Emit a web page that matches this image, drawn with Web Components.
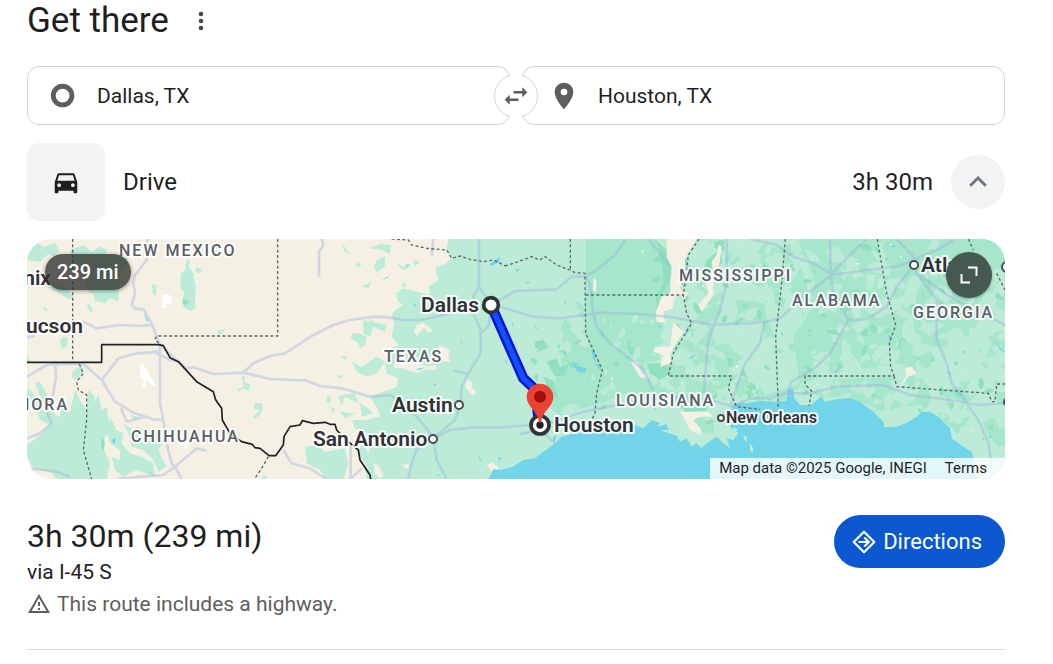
<!DOCTYPE html>
<html lang="en">
<head>
<meta charset="utf-8">
<meta name="viewport" content="width=device-width, initial-scale=1">
<title>Get there</title>
<style>
    body {
        margin: 0;
        background: #fff;
        color: #1f1f1f;
        font-family: Roboto, "Liberation Sans", sans-serif;
    }
</style>
</head>
<body>
<gt-panel>
    <gt-heading>Get there</gt-heading>
    <gt-trip>
        <gt-place slot="from" icon="origin" label="Starting point" value="Dallas, TX"></gt-place>
        <gt-place slot="to" icon="place" label="Destination" value="Houston, TX" inset></gt-place>
    </gt-trip>
    <gt-mode icon="car">Drive<span slot="time">3h 30m</span></gt-mode>
    <gt-map>239 mi</gt-map>
    <gt-summary>
        <span slot="total">3h 30m (239 mi)</span>
        <span slot="via">via I-45 S</span>
        <span slot="note">This route includes a highway.</span>
    </gt-summary>
</gt-panel>

<script>
class GtElement extends HTMLElement {
    constructor() {
        super();
        this.attachShadow({mode: 'open'});
        const template = document.createElement('template');
        template.innerHTML = this.template();
        this.shadowRoot.appendChild(template.content.cloneNode(true));
    }
}

const ICONS = {
    more: '<path d="M12 8a2 2 0 1 0 0-4 2 2 0 0 0 0 4zm0 6a2 2 0 1 0 0-4 2 2 0 0 0 0 4zm0 6a2 2 0 1 0 0-4 2 2 0 0 0 0 4z"/>',
    origin: '<circle cx="11.700" cy="11.700" r="7" fill="none" stroke="currentColor" stroke-width="3.600"/>',
    place: '<path d="M12 2C8.13 2 5 5.13 5 9c0 5.25 7 13 7 13s7-7.75 7-13c0-3.87-3.13-7-7-7zm0 9.5a2.5 2.5 0 0 1 0-5 2.5 2.5 0 0 1 0 5z"/>',
    swap: '<path d="M6.99 11L3 15l3.99 4v-3H14v-2H6.99v-3zM21 9l-3.99-4v3H10v2h7.01v3L21 9z"/>',
    car: '<path d="M18.92 6.01C18.72 5.42 18.16 5 17.5 5h-11c-.66 0-1.21.42-1.42 1.01L3 12v8c0 .55.45 1 1 1h1c.55 0 1-.45 1-1v-1h12v1c0 .55.45 1 1 1h1c.55 0 1-.45 1-1v-8l-2.08-5.99zM6.5 16c-.83 0-1.5-.67-1.5-1.5S5.67 13 6.5 13s1.5.67 1.5 1.5S7.33 16 6.5 16zm11 0c-.83 0-1.5-.67-1.5-1.5s.67-1.5 1.5-1.5 1.5.67 1.5 1.5-.67 1.5-1.5 1.5zM5 11l1.5-4.5h11L19 11H5z"/>',
    up: '<path d="M4.2 15.800l7.800-7.800 7.800 7.800" fill="none" stroke="currentColor" stroke-width="3"/>',
    expand: '<path d="M11 4.5h8.500v8.500M13 19.500H4.500V11" fill="none" stroke="currentColor" stroke-width="2"/>',
    directions: '<path d="M12 1.700L22.300 12 12 22.300 1.700 12z" fill="none" stroke="currentColor" stroke-width="2.200" stroke-linejoin="round"/><path d="M6.500 12h10M12.300 7.500l4.500 4.500-4.500 4.500" fill="none" stroke="currentColor" stroke-width="2.200"/>',
    warning: '<path d="M12 5.990L19.530 19H4.470L12 5.990M12 2L1 21h22L12 2zm1 14h-2v2h2v-2zm0-6h-2v4h2v-4z"/>'
};

window.customElements.define('gt-icon', class extends GtElement {
    template() {
        return `
        <style>
        :host {
            display: inline-block;
            flex: none;
            width: var(--icon-size, 24px);
            height: var(--icon-size, 24px);
        }
        svg {
            display: block;
            width: 100%;
            height: 100%;
        }
        </style>
        <svg viewBox="0 0 24 24" fill="currentColor" aria-hidden="true">${ICONS[this.getAttribute('name')]}</svg>`;
    }
});

window.customElements.define('gt-panel', class extends GtElement {
    template() {
        return `
        <style>
        :host {
            display: block;
            padding: 0 48px 0 27px;
        }
        main {
            display: flex;
            flex-direction: column;
            gap: 18px;
        }
        </style>
        <main><slot></slot></main>`;
    }
});

window.customElements.define('gt-heading', class extends GtElement {
    template() {
        return `
        <style>
        :host {
            display: flex;
            align-items: center;
            gap: 18px;
            padding-bottom: 6px;
        }
        h1 {
            margin: 0;
            font-size: 35px;
            font-weight: 400;
            line-height: 42px;
        }
        button {
            display: flex;
            padding: 0;
            border: 0;
            background: none;
            color: #474747;
            --icon-size: 28px;
        }
        </style>
        <h1><slot></slot></h1>
        <button type="button" aria-label="More options"><gt-icon name="more"></gt-icon></button>`;
    }
});

window.customElements.define('gt-trip', class extends GtElement {
    template() {
        return `
        <style>
        :host {
            display: grid;
            grid-template-columns: 1fr 1fr;
            gap: 12px;
            position: relative;
        }
        button {
            position: absolute;
            top: 50%;
            left: 50%;
            transform: translate(-50%, -50%);
            display: flex;
            align-items: center;
            justify-content: center;
            box-sizing: border-box;
            width: 44px;
            height: 44px;
            padding: 0;
            border: 1px solid #d2d2d2;
            border-radius: 50%;
            background: #fff;
            color: #5e5e5e;
            --icon-size: 30px;
        }
        /* opens the ring where it crosses the gap between the fields */
        button::before {
            content: "";
            position: absolute;
            top: -1px;
            bottom: -1px;
            left: 15px;
            width: 12px;
            background: #fff;
        }
        gt-icon {
            position: relative;
        }
        </style>
        <slot name="from"></slot>
        <slot name="to"></slot>
        <button type="button" aria-label="Swap start and destination"><gt-icon name="swap"></gt-icon></button>`;
    }
});

window.customElements.define('gt-place', class extends GtElement {
    template() {
        return `
        <style>
        :host {
            display: block;
            min-width: 0;
        }
        label {
            display: flex;
            align-items: center;
            gap: 18px;
            box-sizing: border-box;
            height: 59px;
            padding: 0 19px;
            border: 1px solid #d2d2d2;
            border-radius: 12px;
            color: #5e5e5e;
            --icon-size: 32px;
        }
        :host([inset]) label {
            padding-left: 25px;
        }
        input {
            flex: 1;
            min-width: 0;
            padding: 0;
            border: 0;
            outline: 0;
            background: none;
            color: #1f1f1f;
            font: 21px/28px Roboto, "Liberation Sans", sans-serif;
        }
        </style>
        <label>
        <gt-icon name="${this.getAttribute('icon')}"></gt-icon>
        <input type="text" aria-label="${this.getAttribute('label')}" value="${this.getAttribute('value')}">
        </label>`;
    }
});

window.customElements.define('gt-mode', class extends GtElement {
    template() {
        return `
        <style>
        :host {
            display: flex;
            align-items: center;
            gap: 18px;
            font-size: 24px;
            line-height: 32px;
        }
        .tile {
            display: flex;
            align-items: center;
            justify-content: center;
            width: 78px;
            height: 78px;
            border-radius: 12px;
            background: #f1f3f4;
            --icon-size: 30px;
        }
        .name {
            flex: 1;
        }
        button {
            display: flex;
            align-items: center;
            justify-content: center;
            width: 54px;
            height: 54px;
            padding: 0;
            border: 0;
            border-radius: 50%;
            background: #f1f3f4;
            color: #70757a;
        }
        </style>
        <div class="tile"><gt-icon name="${this.getAttribute('icon')}"></gt-icon></div>
        <span class="name"><slot></slot></span>
        <slot name="time"></slot>
        <button type="button" aria-label="Collapse"><gt-icon name="up"></gt-icon></button>`;
    }
});

// Small jagged patches of ground cover, repeatable for a given seed.
function patches(seed, count, x, y, width, height, size) {
    const next = () => (seed = (seed * 16807) % 2147483647) / 2147483647;
    let d = '';
    for (let i = 0; i < count; i++) {
        const cx = x + next() * width;
        const cy = y + next() * height;
        const r = size * (0.3 + next());
        const tilt = next() * 3;
        for (let k = 0; k < 8; k++) {
            const angle = k * Math.PI / 4;
            const reach = r * (0.4 + next() * 0.9);
            const px = Math.cos(angle) * reach;
            const py = Math.sin(angle) * reach * 0.6;
            d += (k ? 'L' : 'M')
                + Math.round(cx + px * Math.cos(tilt) - py * Math.sin(tilt)) + ' '
                + Math.round(cy + px * Math.sin(tilt) + py * Math.cos(tilt));
        }
        d += 'Z';
    }
    return d;
}

window.customElements.define('gt-map', class extends GtElement {
    template() {
        // The drawing is made in four tiles, west to east, at three units to the pixel.
        const west = 'transform="translate(-21 -27)"';
        const texas = 'transform="translate(729 -27)"';
        const delta = 'transform="translate(1419 -27)"';
        const east = 'transform="translate(2169 -27)"';
        return `
        <style>
        :host {
            display: block;
            position: relative;
            overflow: hidden;
            height: 240px;
            border-radius: 24px;
            background: #f5f0e4;
        }
        svg {
            display: block;
            width: 100%;
            height: 100%;
        }
        .light { fill: #bcecd8; }
        .mid { fill: #a6e6cb; }
        .deep { fill: #90dfbd; }
        .sand { fill: #f5f0e4; }
        .white { fill: #fff; }
        .water { fill: #72d4e9; }
        .roads { fill: none; stroke: #9aaedb; stroke-opacity: .4; stroke-width: 8; stroke-linejoin: round; }
        .states { fill: none; stroke: #5c6b6b; stroke-width: 4; stroke-dasharray: 9 7; }
        .country { fill: none; stroke: #202124; stroke-width: 5; stroke-linejoin: round; }
        .route { fill: none; stroke: #0a14d2; stroke-width: 31; stroke-linejoin: round; }
        .route-core { fill: none; stroke: #0f53ff; stroke-width: 16; stroke-linejoin: round; }
        text {
            paint-order: stroke;
            stroke: #fff;
            stroke-opacity: .85;
            stroke-width: 4px;
            stroke-linejoin: round;
            font-family: Roboto, "Liberation Sans", sans-serif;
        }
        .state { fill: #5a5e66; font-size: 16px; font-weight: 500; letter-spacing: 2px; }
        .city { fill: #303238; font-size: 21px; font-weight: 600; }
        .town { fill: #303238; font-size: 16px; font-weight: 600; }
        .end { text-anchor: end; }
        .dots { fill: #fff; stroke: #4a4d52; stroke-width: 2; }
        .badge {
            position: absolute;
            top: 15px;
            left: 18px;
            padding: 0 12px;
            border-radius: 18px;
            background: rgba(48, 48, 44, .78);
            box-shadow: 0 1px 4px rgba(0, 0, 0, .4);
            color: #fff;
            font-size: 20px;
            font-weight: 500;
            line-height: 36px;
        }
        button {
            position: absolute;
            top: 13px;
            right: 13px;
            display: flex;
            align-items: center;
            justify-content: center;
            width: 46px;
            height: 46px;
            padding: 0;
            border: 0;
            border-radius: 50%;
            background: #465951;
            box-shadow: 0 1px 3px rgba(0, 0, 0, .3);
            color: #fff;
        }
        footer {
            position: absolute;
            right: 0;
            bottom: 0;
            display: flex;
            gap: 18px;
            padding: 0 18px 0 9px;
            background: rgba(255, 255, 255, .8);
            font-size: 15px;
            line-height: 21px;
        }
        a {
            color: inherit;
            text-decoration: none;
        }
        </style>
        <svg viewBox="0 0 978 240" preserveAspectRatio="xMidYMid slice" role="img" aria-label="Route from Dallas to Houston">
        <defs>
        <clipPath id="woods"><path ${delta} d="M258 27H1520V747H1430L1400 640 1320 560 1240 560 1150 590 1090 520 960 500 780 515 690 560 640 610 560 600 440 560 380 530 250 545 190 560 90 480 60 400 90 300 180 250 258 200Z"/></clipPath>
        </defs>
        <g transform="scale(.333333)">
            <g class="light" ${west}>
                <path d="M21 45 45 35 70 50 105 40 118 62 100 80 85 72 60 95 21 90ZM150 60 190 45 215 65 240 50 262 60 255 75 300 78 325 85 315 110 300 130 296 215 270 205 255 220 225 212 222 195 200 180 190 130 165 120ZM95 150 140 170 158 200 150 210 110 185 80 170ZM128 320 145 325 140 350 125 357 120 335ZM205 220 220 240 215 248 200 232ZM65 232 82 236 80 246ZM21 375 33 397H21Z"/>
                <path d="M395 163 410 165 408 195 413 203 398 190ZM500 88 510 97 506 110 520 130 528 175 525 220 528 235 510 243 492 232 486 215 493 190 480 170 482 132 495 120ZM530 112 550 120 535 130 525 125ZM595 300 615 297 608 308 592 320Z"/>
                <path d="M160 420 185 405 190 425 165 452 155 440ZM665 440 675 437 673 455 692 465 685 482 670 475 655 485 652 478 672 470ZM705 520 725 518 730 530 720 555 703 567 700 560 718 540 700 535Z"/>
                <path d="M21 470 40 490 55 530 75 545 60 500 45 460 60 455 85 500 105 555 120 560 125 500 150 545 165 480 180 510 200 540 205 480 225 500 222 520 235 495 245 540 262 530 265 570 280 580 270 610 255 620 250 655 270 700 260 747H110L90 725 40 715 21 680V645L60 615 90 585 60 570 45 530 21 500Z"/>
                <path d="M250 565 275 600 270 560 290 600 310 610 305 640 330 670 365 680 400 700 405 740 350 720 310 740 285 720 275 680 300 690 300 660 270 640ZM310 580 340 600 350 590 380 605 400 598 430 640 415 660 440 710 415 725 400 690 370 660 335 650 325 610ZM330 555 355 560 345 570ZM730 735 740 738 738 747H728Z"/>
            </g>
            <path class="light" ${texas} d="M535 27 530 60 545 85 520 105 495 112 505 150 475 170 480 195 440 185 400 175 378 190 385 215 400 225 375 240 365 255 372 280 365 320 385 345 355 360 345 400 350 430 385 445 380 470 330 490 300 500 325 540 330 560 285 570 245 570 255 595 290 610 275 640 265 670 285 700 290 747H2250V27Z"/>
            <path class="light" ${texas} d="M213 35 240 72 225 65ZM300 55 330 42 362 45 360 72 335 60ZM320 90 345 80 345 110 320 127 312 110ZM265 95 275 105 255 113ZM375 95 400 110 425 105 400 122ZM395 155 410 165 400 175ZM275 170 303 155 295 175ZM430 90 450 95 435 110ZM300 265 315 280 300 290ZM245 312 262 308 290 320 285 345 270 355 262 335 240 325ZM280 270 350 285 345 305 310 290 300 320 280 310ZM210 378 232 382 225 390ZM245 395 275 410 320 380 345 395 320 430 290 440 260 425ZM200 435 218 437 208 447ZM172 497 182 500 180 520 170 515ZM205 497 255 490 265 520 225 500 215 525ZM180 530 195 535 190 553ZM270 520 295 535 310 550 275 560ZM210 545 255 550 225 565ZM105 650 140 645 165 665 225 655 235 700 220 747H165L150 720 110 700Z"/>
            <path class="sand" ${texas} d="M432 305 440 285 460 278 487 300 475 308 462 292 445 310 443 320ZM505 345 540 360 535 385 545 395 520 395ZM440 395 470 410 500 405 495 420 465 418 440 430 400 415 370 415 375 395ZM590 450 605 455 607 475 620 487 607 497 585 470ZM490 130 470 150 480 165 500 150ZM395 705 415 702 418 717 405 715ZM650 705 665 697 685 710 680 735 665 725ZM310 700 325 705 340 735 330 747 315 730ZM285 650 300 655 295 670Z"/>
            <path class="deep" ${west} d="M490 205 508 215 500 225 488 222ZM245 620 255 640 250 665 243 645Z"/>
            <path class="white" ${west} d="M425 195 440 190 455 200 453 220 440 222 438 235 424 235 428 215ZM360 405 370 402 385 430 410 470 395 465 380 450 375 477 368 470 370 450 360 440ZM470 640 510 635 500 655Z"/>

            <path class="mid" ${delta} d="M258 27H465L495 70 510 110 505 160 470 230 490 290 475 350 480 390 430 400 460 470 500 480 620 500 690 530 780 500 850 500 940 450 1180 440 1195 470 1150 545 1050 500 960 500 900 470 880 320 960 200 900 27H1516V250L1350 300 1270 440 1200 400 1000 430 780 500 560 500 480 490 430 510 380 490 300 520 230 540 190 560 155 540 150 470 190 420 180 390 215 360 200 320 258 300Z"/>
            <g clip-path="url(#woods)">
                <path class="mid" d="${patches(77, 150, 1600, 0, 1334, 640, 46)}"/>
                <path class="light" d="${patches(4021, 170, 1960, 0, 974, 560, 32)}"/>
                <path class="light" d="${patches(93, 30, 1560, 240, 380, 300, 20)}"/>
                <path class="deep" d="${patches(815, 95, 1880, 0, 1054, 600, 15)}"/>
                <path class="deep" d="${patches(2718, 20, 1520, 280, 330, 260, 14)}"/>
                <path class="light" d="${patches(555, 60, 2450, 100, 484, 580, 34)}"/>
                <path class="white" d="${patches(313, 36, 1680, 0, 1254, 640, 4)}"/>
            </g>
            <path class="deep" ${delta} d="M465 27 500 60 515 110 508 160 480 200 470 250 468 200 490 160 485 80ZM105 335 130 330 145 350 120 365 105 350ZM140 395 170 385 180 410 205 405 195 435 165 440ZM620 90 660 60 668 95 640 140 610 120ZM640 35 670 30 675 60 650 60ZM440 400 500 400 510 430 480 450 450 430ZM520 500 600 505 610 540 560 550ZM130 440 158 450 175 505 150 490Z"/>
            <path class="sand" ${delta} d="M500 27H590L560 75 555 130 540 175 555 195 525 200 518 235 490 245 497 280 470 275 468 245 485 200 510 190 515 110 500 80ZM595 225 625 190 615 150 640 130 635 95 650 75 655 45 665 50 658 105 640 150 640 195 605 245ZM520 275 550 305 525 345 510 375 515 400 480 410 490 375 460 365 465 350 510 350ZM280 145 290 150 287 190 280 180ZM390 392 415 398 425 430 447 445 420 440ZM540 545 625 545 640 560 600 560 580 570 605 600 600 615 570 600 555 570ZM540 180 565 190 550 212Z"/>
            <path class="sand" ${east} d="M465 415 485 410 500 430 475 440 450 470 470 435Z"/>

            <g class="water">
                <path ${delta} d="M-35 747-20 718 0 720 35 712 70 690 105 685 130 665 165 640 185 620 215 612 260 605 300 595 350 578 370 592 400 582 430 595 450 575 475 590 500 582 505 600 480 600 530 618 540 635 560 625 575 650 590 640 605 655 620 640 650 620 665 635 690 655 680 625 700 630 715 610 690 590 700 570 740 575 735 560 690 555 700 520 740 520 780 513 825 515 858 512 865 480 878 475 883 505 900 525 935 525 950 510 965 500 975 515 1010 508 1050 503 1080 515 1120 545 1150 575 1150 592 1190 590 1220 578 1250 560 1265 545 1290 545 1320 565 1350 595 1355 625 1390 650 1415 665 1425 700 1430 747Z"/>
                <path ${delta} d="M213 400 235 408 260 415 255 428 235 425ZM275 360 285 365 288 395 278 385ZM285 398 305 410 300 420ZM450 570 480 578 465 600ZM158 622 170 615 162 640Z"/>
                <path ${west} d="M370 248 385 272 380 274ZM585 500 595 515 590 520ZM277 628 287 625 285 640 278 640ZM387 724 394 728 388 731Z"/>
                <path ${texas} d="M333 152 360 135 350 145ZM658 103 690 80 688 95 665 108ZM405 105 420 103 412 110ZM430 222 440 225 437 232ZM435 418 465 412 450 420ZM490 462 500 460 495 468ZM568 325 580 343 572 335ZM705 380 713 405 707 400ZM725 272 732 292 727 288ZM625 675 637 693 628 688ZM685 680 695 683 687 692ZM735 120 750 115 742 126ZM498 733 510 735 502 738Z"/>
                <path ${east} d="M725 330 765 365 763 370ZM715 615 727 622 718 625ZM175 315 185 312 178 322ZM250 428 270 412 260 428ZM420 45 440 47 430 52ZM415 315 425 318 418 335Z"/>
                <path ${delta} d="M190 208 202 225 196 222ZM105 285 113 297 107 296ZM75 157 90 155 85 161ZM565 385 590 370 578 385ZM475 280 485 295 477 292ZM555 80 563 100 556 110ZM560 290 568 300 555 320Z"/>
            </g>
            <path class="light" ${delta} d="M730 615 742 620 740 635 733 630ZM750 640 760 655 757 668 750 660ZM700 590 715 600 705 606Z"/>

            <g class="roads">
                <path ${west} d="M382 27 380 90 345 135 340 160 345 190 335 225 345 235 370 238 395 280 410 320 420 345 420 520 430 570 440 640 455 700 465 710 485 747M190 275 230 295 300 285 360 288 392 285M21 440 80 405 105 402H190L245 450 285 515 340 548 400 568 430 570M245 450 295 385 350 370 420 365M105 402 108 440 100 490 80 545 95 580 60 610 21 625M303 535 320 575 375 560M465 710 500 680 530 655 560 662M465 710 430 735 360 740 290 747M420 345 470 390 500 415 520 412 580 432 670 428 700 400 750 378M670 428 750 447M400 365 450 390 480 395M21 715 70 720 110 725 150 740M21 322 45 318"/>
                <path ${texas} d="M0 378 45 370 130 315 190 285 240 270 310 260 355 262 400 270 450 270 490 262 560 245 640 235M0 447 110 452 150 468 215 475 300 500 360 495 390 515 440 560 490 620M155 27 160 45 147 65V140M627 27V170L610 200V250L632 300V370L595 430 575 470 572 520 555 570 500 615 490 625 440 660 425 700 415 747M490 625 500 690 530 747M490 625 540 600 610 592H690M665 225 655 290 632 310M627 170 665 225 690 210M552 422 595 433M490 27 485 80M40 660 65 700 120 715 165 745M242 640V745L275 715"/>
                <path ${delta} d="M0 210 45 183 170 178 215 140H255L290 120 345 75 375 30M255 140 270 160 280 250 290 290 330 340 400 395 430 420 460 480M0 230 100 260 180 265 300 248 420 252 520 262 640 285 720 280 750 280M680 27V160L660 240 625 330 618 400 612 490M0 592 95 585 160 575 250 545 350 525 440 505 540 500 650 515 700 530 750 505M60 612 120 600 165 640M445 27 480 70 510 110M690 530 735 400 780 340 795 275"/>
                <path ${east} d="M0 280 50 275 90 265 150 210 180 185 245 135 350 120 440 110 480 95 560 60 610 30M240 27 242 135 250 190 295 270 240 370 200 410 125 455 110 490 60 505H0M0 27 80 45 130 80 190 100 245 130 300 75 350 27M295 270 350 268 410 230 440 170 490 110M440 27 490 80 500 130 560 210V330L590 400 605 460 640 500 690 580 715 640 725 700M110 490H180L260 470 400 465 480 495 600 510 690 525 765 520M500 130 600 200 765 285"/>
            </g>
            <g class="states">
                <path ${west} d="M158 27V397M773 27V318H410L405 328 420 343M178 402 190 430 170 455 175 480 200 495V570L190 660 215 747M745 680 725 715 705 745"/>
                <path ${texas} d="M365 27 415 30 425 45 470 55 530 60 545 85 570 78 600 88 640 95 670 90 705 107"/>
                <path ${delta} d="M15 108 55 95 95 80 120 90 135 80 170 105 210 120 225 128 255 130 257 310 280 360 307 420 290 490 285 550 270 580M211 27V120M257 195H550M597 27 565 75 560 120 550 195 560 250 575 280 550 320 520 370 505 438H695L685 475 710 530 780 538"/>
                <path ${east} d="M106 27 95 160 77 320 85 535M382 27 410 190 437 285 418 340 422 410 432 438H165V463L185 483 177 528M432 438 440 470 715 490 725 515H735L740 462H765M655 27 670 60M740 130 765 180"/>
            </g>
            <path class="country" ${west} d="M21 397H245V344H415L430 347 450 383 475 395 530 455 580 485 587 510 605 535 607 570 630 610 665 635 697 643 705 653 720 655 747 677H767L790 645 792 620 810 590 840 585 847 572 880 580 915 577 930 583H945L950 600 985 635 1015 660 1020 690 1050 735 1052 747"/>

            <g ${delta}>
                <path class="route" d="M-27 225 70 445 105 478 115 560"/>
                <path class="route-core" d="M-27 225 70 445 105 478 115 560"/>
                <circle cx="-27" cy="225" r="22" fill="#fff" stroke="#303238" stroke-width="11"/>
                <circle cx="120" cy="585" r="27" fill="#fff" stroke="#303238" stroke-width="11"/>
                <circle cx="120" cy="585" r="11" fill="#202124"/>
                <path d="M120 461C98 461 80 478 80 500 80 530 113 542 117 575 118 579 122 579 123 575 127 542 160 530 160 500 160 478 142 461 120 461Z" fill="#ea4335"/>
                <circle cx="120" cy="500" r="18" fill="#a50e0e"/>
            </g>
        </g>
        <g class="state">
            <text x="92" y="17">NEW MEXICO</text>
            <text x="357" y="123">TEXAS</text>
            <text x="104" y="203">CHIHUAHUA</text>
            <text class="end" x="42" y="171">NORA</text>
            <text x="589" y="167">LOUISIANA</text>
            <text x="652" y="42">MISSISSIPPI</text>
            <text x="765" y="67">ALABAMA</text>
            <text x="886" y="79">GEORGIA</text>
        </g>
        <g class="city">
            <text class="end" x="24" y="46">nix</text>
            <text class="end" x="56" y="94">ucson</text>
            <text x="394" y="73">Dallas</text>
            <text x="365" y="173">Austin</text>
            <text x="286" y="207">San Antonio</text>
            <text x="527" y="193">Houston</text>
            <text x="894" y="33">Atlanta</text>
        </g>
        <text class="town" x="699" y="184">New Orleans</text>
        <g class="dots">
            <circle cx="432" cy="166" r="4"/>
            <circle cx="406" cy="200" r="4"/>
            <circle cx="694" cy="179" r="3"/>
            <circle cx="887" cy="26" r="4"/>
            <circle cx="980" cy="28" r="5"/>
            <circle cx="980" cy="163" r="3"/>
        </g>
        </svg>
        <span class="badge"><slot></slot></span>
        <button type="button" aria-label="Expand map"><gt-icon name="expand"></gt-icon></button>
        <footer><span>Map data ©2025 Google, INEGI</span><a href="#terms">Terms</a></footer>`;
    }
});

window.customElements.define('gt-summary', class extends GtElement {
    template() {
        return `
        <style>
        :host {
            display: flex;
            align-items: flex-start;
            justify-content: space-between;
            padding: 18px 0 30px;
            border-bottom: 1px solid #dadce0;
            font-size: 21px;
            line-height: 30px;
        }
        h2 {
            margin: 0;
            font-size: 32px;
            font-weight: 400;
            line-height: 42px;
        }
        p {
            margin: 0;
        }
        .note {
            display: flex;
            align-items: center;
            gap: 6px;
            margin-top: 2px;
            color: #5e5e5e;
        }
        a {
            display: flex;
            align-items: center;
            gap: 7px;
            padding: 0 23px 0 18px;
            border-radius: 27px;
            background: #0b57d0;
            color: #fff;
            font-size: 22px;
            line-height: 53px;
            text-decoration: none;
        }
        </style>
        <div>
        <h2><slot name="total"></slot></h2>
        <p><slot name="via"></slot></p>
        <p class="note"><gt-icon name="warning"></gt-icon><slot name="note"></slot></p>
        </div>
        <a href="#directions"><gt-icon name="directions"></gt-icon>Directions</a>`;
    }
});
</script>
</body>
</html>
